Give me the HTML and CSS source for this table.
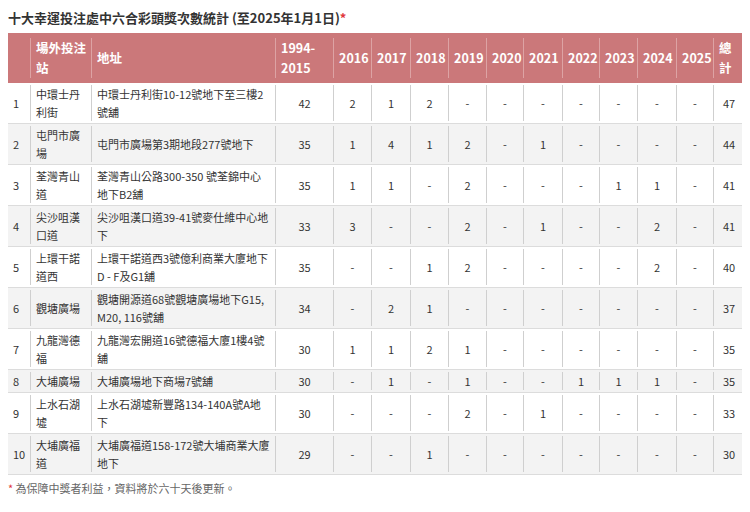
FILE: index.html
```html
<!DOCTYPE html>
<html lang="zh-Hant">
<head>
<meta charset="utf-8">
<title>十大幸運投注處</title>
<link rel="stylesheet" href="styles.css">
</head>
<body>
<h1 class="title">十大幸運投注處中六合彩頭獎次數統計 (至2025年1月1日)<span class="star">*</span></h1>
<div class="table">
  <div class="row head">
    <div class="c"></div>
    <div class="c">場外投注<br>站</div>
    <div class="c">地址</div>
    <div class="c">1994-<br>2015</div>
    <div class="c">2016</div><div class="c">2017</div><div class="c">2018</div><div class="c">2019</div><div class="c">2020</div>
    <div class="c">2021</div><div class="c">2022</div><div class="c">2023</div><div class="c">2024</div><div class="c">2025</div>
    <div class="c">總<br>計</div>
  </div>
  <div class="row">
    <div class="c">1</div><div class="c">中環士丹<br>利街</div><div class="c">中環士丹利街10-12號地下至三樓2<br>號舖</div>
    <div class="c n">42</div><div class="c n">2</div><div class="c n">1</div><div class="c n">2</div><div class="c n">-</div><div class="c n">-</div><div class="c n">-</div><div class="c n">-</div><div class="c n">-</div><div class="c n">-</div><div class="c n">-</div><div class="c n">47</div>
  </div>
  <div class="row">
    <div class="c">2</div><div class="c">屯門市廣<br>場</div><div class="c">屯門市廣場第3期地段277號地下</div>
    <div class="c n">35</div><div class="c n">1</div><div class="c n">4</div><div class="c n">1</div><div class="c n">2</div><div class="c n">-</div><div class="c n">1</div><div class="c n">-</div><div class="c n">-</div><div class="c n">-</div><div class="c n">-</div><div class="c n">44</div>
  </div>
  <div class="row">
    <div class="c">3</div><div class="c">荃灣青山<br>道</div><div class="c">荃灣青山公路300-350 號荃錦中心<br>地下B2舖</div>
    <div class="c n">35</div><div class="c n">1</div><div class="c n">1</div><div class="c n">-</div><div class="c n">2</div><div class="c n">-</div><div class="c n">-</div><div class="c n">-</div><div class="c n">1</div><div class="c n">1</div><div class="c n">-</div><div class="c n">41</div>
  </div>
  <div class="row">
    <div class="c">4</div><div class="c">尖沙咀漢<br>口道</div><div class="c">尖沙咀漢口道39-41號麥仕維中心地<br>下</div>
    <div class="c n">33</div><div class="c n">3</div><div class="c n">-</div><div class="c n">-</div><div class="c n">2</div><div class="c n">-</div><div class="c n">1</div><div class="c n">-</div><div class="c n">-</div><div class="c n">2</div><div class="c n">-</div><div class="c n">41</div>
  </div>
  <div class="row">
    <div class="c">5</div><div class="c">上環干諾<br>道西</div><div class="c">上環干諾道西3號億利商業大廈地下<br>D - F及G1舖</div>
    <div class="c n">35</div><div class="c n">-</div><div class="c n">-</div><div class="c n">1</div><div class="c n">2</div><div class="c n">-</div><div class="c n">-</div><div class="c n">-</div><div class="c n">-</div><div class="c n">2</div><div class="c n">-</div><div class="c n">40</div>
  </div>
  <div class="row">
    <div class="c">6</div><div class="c">觀塘廣場</div><div class="c">觀塘開源道68號觀塘廣場地下G15,<br>M20, 116號舖</div>
    <div class="c n">34</div><div class="c n">-</div><div class="c n">2</div><div class="c n">1</div><div class="c n">-</div><div class="c n">-</div><div class="c n">-</div><div class="c n">-</div><div class="c n">-</div><div class="c n">-</div><div class="c n">-</div><div class="c n">37</div>
  </div>
  <div class="row">
    <div class="c">7</div><div class="c">九龍灣德<br>福</div><div class="c">九龍灣宏開道16號德福大廈1樓4號<br>舖</div>
    <div class="c n">30</div><div class="c n">1</div><div class="c n">1</div><div class="c n">2</div><div class="c n">1</div><div class="c n">-</div><div class="c n">-</div><div class="c n">-</div><div class="c n">-</div><div class="c n">-</div><div class="c n">-</div><div class="c n">35</div>
  </div>
  <div class="row">
    <div class="c">8</div><div class="c">大埔廣場</div><div class="c">大埔廣場地下商場7號舖</div>
    <div class="c n">30</div><div class="c n">-</div><div class="c n">1</div><div class="c n">-</div><div class="c n">1</div><div class="c n">-</div><div class="c n">-</div><div class="c n">1</div><div class="c n">1</div><div class="c n">1</div><div class="c n">-</div><div class="c n">35</div>
  </div>
  <div class="row">
    <div class="c">9</div><div class="c">上水石湖<br>墟</div><div class="c">上水石湖墟新豐路134-140A號A地<br>下</div>
    <div class="c n">30</div><div class="c n">-</div><div class="c n">-</div><div class="c n">-</div><div class="c n">2</div><div class="c n">-</div><div class="c n">1</div><div class="c n">-</div><div class="c n">-</div><div class="c n">-</div><div class="c n">-</div><div class="c n">33</div>
  </div>
  <div class="row">
    <div class="c">10</div><div class="c">大埔廣福<br>道</div><div class="c">大埔廣福道158-172號大埔商業大廈<br>地下</div>
    <div class="c n">29</div><div class="c n">-</div><div class="c n">-</div><div class="c n">1</div><div class="c n">-</div><div class="c n">-</div><div class="c n">-</div><div class="c n">-</div><div class="c n">-</div><div class="c n">-</div><div class="c n">-</div><div class="c n">30</div>
  </div>
</div>
<p class="note"><span class="star">*</span> 為保障中獎者利益，資料將於六十天後更新。</p>
</body>
</html>
```
FILE: styles.css
```css
body {
  margin: 8px;
  background: #fff;
  color: #333;
  font-family: "Noto Sans CJK TC", "Noto Sans", sans-serif;
}
.title {
  margin: 0 0 5px;
  font-size: 13px;
  line-height: 20px;
  font-weight: bold;
  color: #333;
}
.star { color: #e0353b; }
.table {
  width: 736px;
  font-size: 11px;
}
.row {
  display: grid;
  grid-template-columns: 22px 61px 184px 58px 38px 39px 38px 38px 37px 39px 37px 38px 39px 37px 31px;
  padding: 2px 0;
  border-bottom: 1px solid #dcdcdc;
  line-height: 18px;
}
.row:nth-child(odd) { background: #f3f3f3; }
.row.head {
  background: #cb787a;
  color: #fff;
  font-weight: bold;
  font-size: 12.5px;
  line-height: 20px;
  padding: 5px 0;
  border-bottom: none;
}
.c {
  display: flex;
  align-items: center;
  padding: 0 5px;
  border-left: 1px solid #cfcfcf;
  white-space: nowrap;
}
.c:first-child { border-left: none; }
.head .c { border-left-color: #dda3a4; }
.c.n { justify-content: center; }
.note {
  margin: 4px 0 0;
  font-size: 11px;
  line-height: 18px;
  color: #666;
}
```
